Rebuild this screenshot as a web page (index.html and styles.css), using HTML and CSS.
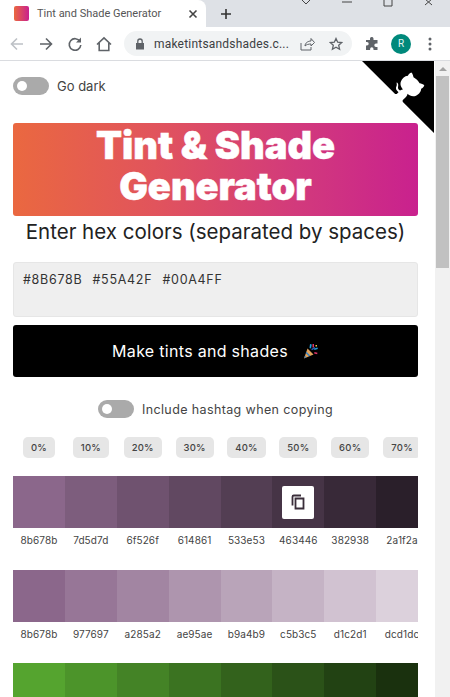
FILE: index.html
```html
<!DOCTYPE html>
<html lang="en">
<head>
<meta charset="utf-8">
<title>Tint and Shade Generator</title>
<link rel="stylesheet" href="styles.css">
</head>
<body>
<div class="browser">
  <header class="tabstrip">
    <div class="tab">
      <span class="favicon"></span>
      <span class="tab-title">Tint and Shade Generator</span>
      <svg class="tab-close" width="10" height="10" viewBox="0 0 10 10"><path d="M1.500 1.500l7 7M8.500 1.500l-7 7"/></svg>
    </div>
    <svg class="new-tab" width="12" height="12" viewBox="0 0 12 12"><path d="M6 1v10M1 6h10"/></svg>
    <div class="win-controls">
      <svg width="14" height="8" viewBox="0 0 14 8"><path d="M3 0l4 4 4-4"/></svg>
      <svg width="14" height="8" viewBox="0 0 14 8"><path d="M2 2h10"/></svg>
      <svg width="14" height="8" viewBox="0 0 14 8"><path d="M3 -4h8v10h-8z"/></svg>
      <svg width="14" height="8" viewBox="0 0 14 8"><path d="M3 -1l7 6M10 -1l-7 6"/></svg>
    </div>
  </header>
  <nav class="toolbar">
    <svg class="tool tool-off" width="16" height="16" viewBox="0 0 16 16"><path d="M14 8H2.500M8 2.500L2.500 8 8 13.500"/></svg>
    <svg class="tool" width="16" height="16" viewBox="0 0 16 16"><path d="M2 8h11.500M8 2.500L13.500 8 8 13.500"/></svg>
    <svg class="tool" width="16" height="16" viewBox="0 0 16 16"><path d="M13 5.500A5.800 5.800 0 1 0 13.800 9"/><path class="solid" d="M14 1.500v5h-5z"/></svg>
    <svg class="tool" width="16" height="16" viewBox="0 0 16 16"><path d="M1 8.500L8 1.800 15 8.500M3.200 7v7.500h9.600V7"/></svg>
    <div class="omnibox">
      <svg class="lock" width="10" height="12" viewBox="0 0 10 12"><path d="M1 5h8v6.500H1z"/><path class="lock-loop" d="M2.800 5V3.200a2.200 2.200 0 0 1 4.400 0V5"/></svg>
      <span class="url">maketintsandshades.c...</span>
      <svg class="tool share" width="15" height="14" viewBox="0 0 15 14"><path d="M1 6v7h10v-3M5 9c0-3 3-5 6-5V1.500L14.500 5.500 11 9V7C8.500 7 6.500 7.500 5 9z"/></svg>
      <svg class="tool star" width="14" height="14" viewBox="0 0 14 14"><path d="M7 1.500l1.700 3.700 4 .4-3 2.700.9 4L7 10.300l-3.600 2 .9-4-3-2.700 4-.4z"/></svg>
    </div>
    <svg class="puzzle" width="15" height="15" viewBox="0 0 15 15"><path d="M5 2.500a1.800 1.800 0 0 1 3.500 0V4h4v3.500H11a1.700 1.700 0 0 0 0 3.400h1.500V14h-4v-1a1.700 1.700 0 0 0-3.400 0v1H1V9.500h1a1.700 1.700 0 0 0 0-3.400H1V4h4z"/></svg>
    <span class="avatar">R</span>
    <svg class="kebab" width="4" height="14" viewBox="0 0 4 14"><circle cx="2" cy="2" r="1.500"/><circle cx="2" cy="7" r="1.500"/><circle cx="2" cy="12" r="1.500"/></svg>
  </nav>
  <div class="viewport">
    <main class="page">
      <a class="corner" href="#" aria-label="View source on GitHub">
        <svg width="72" height="72" viewBox="0 0 250 250">
          <path d="M0,0 L115,115 L130,115 L142,142 L250,250 L250,0 Z"/>
          <path class="octo" d="M128.300,109.000 C113.800,99.700 119.000,89.600 119.000,89.600 C122.000,82.700 120.500,78.600 120.500,78.600 C119.200,72.000 123.400,76.300 123.400,76.300 C127.300,80.900 125.500,87.300 125.500,87.300 C122.900,97.600 130.600,101.900 134.400,103.200"/>
          <path class="octo" d="M115.000,115.000 C114.900,115.100 118.700,116.500 119.800,115.400 L133.700,101.600 C136.900,99.200 139.900,98.400 142.200,98.600 C133.800,88.000 127.500,74.400 143.800,58.000 C148.500,53.400 154.000,51.200 159.700,51.000 C160.300,49.400 163.200,43.600 171.400,40.100 C171.400,40.100 176.100,42.500 178.800,56.200 C183.100,58.600 187.200,61.800 190.900,65.400 C194.500,69.000 197.700,73.200 200.100,77.600 C213.800,80.200 216.300,84.900 216.300,84.900 C212.700,93.100 206.900,96.000 205.400,96.600 C205.100,102.400 203.000,107.800 198.300,112.500 C181.900,128.900 168.300,122.500 157.700,114.100 C157.900,116.900 156.700,120.900 152.700,124.900 L141.000,136.500 C139.800,137.700 141.600,141.900 141.800,141.800 Z"/>
        </svg>
      </a>
      <label class="switch-row dark-row">
        <span class="switch"><span class="knob"></span></span>
        <span>Go dark</span>
      </label>
      <h1 class="hero">Tint &amp; Shade Generator</h1>
      <h2 class="prompt">Enter hex colors (separated by spaces)</h2>
      <div class="hex-input">#8B678B #55A42F #00A4FF</div>
      <button class="make">Make tints and shades
        <svg class="popper" width="16" height="16" viewBox="0 0 16 16">
          <path fill="#e0a15a" d="M1 15.500l3.500-10 6 6z"/>
          <path fill="#2f7fc4" d="M3.400 8.700l4 4-1.400.6-3.300-3.300zM1.900 12.800l1.500 1.500-1.400.6-.6-.6z"/>
          <path fill="#1d9bd8" d="M7 1l1.800.5-.8 4-1.500-.5zM11 5.500l3.500-1 .4 1.500-3.500 1z"/>
          <path fill="#e0356b" d="M9.500 1h1.500v3.500H9.500zM11.500 9l3 .8-.4 1.400-3-.8z"/>
          <path fill="#f4c542" d="M12.500 2h1.500v1.500h-1.500z"/>
          <path fill="#2a5fb8" d="M8.200 6l3.500-2 .7 1.200-3.500 2z"/>
        </svg>
      </button>
      <label class="switch-row hash-row">
        <span class="switch"><span class="knob"></span></span>
        <span>Include hashtag when copying</span>
      </label>
      <div class="cols percents">
        <span class="chip">0%</span><span class="chip">10%</span><span class="chip">20%</span><span class="chip">30%</span><span class="chip">40%</span><span class="chip">50%</span><span class="chip">60%</span><span class="chip">70%</span>
      </div>
      <section class="palette">
        <div class="cols swatches">
          <span class="swatch" style="background:#8b678b"></span><span class="swatch" style="background:#7d5d7d"></span><span class="swatch" style="background:#6f526f"></span><span class="swatch" style="background:#614861"></span><span class="swatch" style="background:#533e53"></span><span class="swatch" style="background:#463446"><span class="copy"><svg width="14" height="16" viewBox="0 0 14 16"><path d="M4.500 4.500h8v10h-8z"/><path d="M1.500 11.500V2.800q0-1.300 1.300-1.300H10"/></svg></span></span><span class="swatch" style="background:#382938"></span><span class="swatch" style="background:#2a1f2a"></span>
        </div>
        <div class="cols labels">
          <span>8b678b</span><span>7d5d7d</span><span>6f526f</span><span>614861</span><span>533e53</span><span>463446</span><span>382938</span><span>2a1f2a</span>
        </div>
      </section>
      <section class="palette">
        <div class="cols swatches">
          <span class="swatch" style="background:#8b678b"></span><span class="swatch" style="background:#977697"></span><span class="swatch" style="background:#a285a2"></span><span class="swatch" style="background:#ae95ae"></span><span class="swatch" style="background:#b9a4b9"></span><span class="swatch" style="background:#c5b3c5"></span><span class="swatch" style="background:#d1c2d1"></span><span class="swatch" style="background:#dcd1dc"></span>
        </div>
        <div class="cols labels">
          <span>8b678b</span><span>977697</span><span>a285a2</span><span>ae95ae</span><span>b9a4b9</span><span>c5b3c5</span><span>d1c2d1</span><span>dcd1dc</span>
        </div>
      </section>
      <section class="palette">
        <div class="cols swatches">
          <span class="swatch" style="background:#55a42f"></span><span class="swatch" style="background:#4c942a"></span><span class="swatch" style="background:#448326"></span><span class="swatch" style="background:#3b7321"></span><span class="swatch" style="background:#33621c"></span><span class="swatch" style="background:#2b5218"></span><span class="swatch" style="background:#224213"></span><span class="swatch" style="background:#1a310e"></span>
        </div>
      </section>
    </main>
    <aside class="scrollbar">
      <span class="scroll-up"></span>
      <span class="thumb"></span>
    </aside>
  </div>
</div>
</body>
</html>
```

FILE: styles.css
```css
* { box-sizing: border-box; }
html, body { margin: 0; height: 100%; overflow: hidden; }
body { font-family: "Inter", "Liberation Sans", sans-serif; color: #333; background: #fff; }
.browser { width: 450px; height: 697px; display: flex; flex-direction: column; overflow: hidden; }

.tabstrip { height: 27px; flex: none; background: #dee1e6; display: flex; align-items: center; position: relative; }
.tab { width: 206px; height: 27px; background: #fff; border-radius: 0 8px 0 0; display: flex; align-items: center; padding: 0 8px 0 14px; }
.favicon { width: 15px; height: 15px; border-radius: 2px; background: linear-gradient(90deg, #ea6840, #c9218e); flex: none; }
.tab-title { font: 11px "Roboto", "Liberation Sans", sans-serif; color: #555; margin-left: 8px; white-space: nowrap; flex: 1; }
.tab-close { stroke: #444; stroke-width: 1.600; fill: none; flex: none; }
.new-tab { margin-left: 14px; stroke: #333; stroke-width: 1.600; fill: none; }
.win-controls { margin-left: auto; display: flex; align-self: flex-start; gap: 27px; padding-right: 14px; }
.win-controls svg { stroke: #444; stroke-width: 1; fill: none; display: block; overflow: hidden; }

.toolbar { height: 34px; flex: none; background: #fff; border-bottom: 1px solid #dadce0; display: flex; align-items: center; padding: 0 0 0 9px; }
.tool { stroke: #5f6368; stroke-width: 1.600; fill: none; flex: none; margin-right: 13px; }
.tool-off { stroke: #bdc1c6; }
.tool .solid { fill: #5f6368; stroke: none; }
.omnibox { width: 228px; height: 25px; margin-left: -1px; background: #f1f3f4; border-radius: 13px; display: flex; align-items: center; padding-left: 11px; flex: none; }
.lock { flex: none; }
.lock path { fill: #5f6368; }
.lock .lock-loop { fill: none; stroke: #5f6368; stroke-width: 1.300; }
.url { font: 12px "Roboto", "Liberation Sans", sans-serif; color: #3c4043; margin-left: 9px; white-space: nowrap; flex: 1; letter-spacing: .2px; }
.share { stroke-width: 1; margin-right: 14px; }
.star { stroke-width: 1.300; margin-right: 9px; }
.puzzle { fill: #5f6368; margin-left: 13px; flex: none; }
.avatar { width: 20px; height: 20px; border-radius: 50%; background: #00897b; color: #e8f5f3; font: 10px/20px "Roboto", sans-serif; text-align: center; margin-left: 11px; flex: none; }
.kebab { fill: #5f6368; margin-left: 17px; flex: none; }

.viewport { flex: 1; min-height: 0; display: flex; }
.page { width: 435px; flex: none; padding: 0 17px 0 13px; position: relative; overflow: hidden; }
.corner { position: absolute; top: 0; right: 1px; line-height: 0; }
.corner svg { fill: #000; }
.corner .octo { fill: #fff; }

.switch-row { display: flex; align-items: center; gap: 8px; font-size: 13px; color: #444; }
.dark-row { margin-top: 16px; height: 18px; }
.hash-row { justify-content: center; margin-top: 23px; height: 18px; font-size: 12.500px; letter-spacing: .38px; }
.switch { width: 36px; height: 18px; background: #aaa; border-radius: 9px; display: flex; align-items: center; padding-left: 4px; flex: none; }
.knob { width: 10px; height: 10px; border-radius: 50%; background: #fff; }

.hero { margin: 28px 0 0; height: 93px; border-radius: 3px; background: linear-gradient(90deg, #ea6840, #e1545c 35%, #d23a7c 70%, #c9218e); color: #fff; font-size: 38px; font-weight: 900; line-height: 41px; -webkit-text-stroke: .5px #fff; text-align: center; padding: 0 50px 7px; display: flex; align-items: center; justify-content: center; }
.prompt { margin: 5px 0 0; height: 22px; font-size: 20.500px; font-weight: 400; line-height: 22px; text-align: center; color: #222; white-space: nowrap; }

.hex-input { margin-top: 19px; height: 55px; background: #efefef; border: 1px solid #e6e6e6; border-radius: 3px; padding: 7px 9px; font-size: 12.500px; line-height: 20px; color: #333; letter-spacing: .7px; word-spacing: 6px; }
.make { display: flex; align-items: center; justify-content: center; gap: 15px; width: 100%; height: 52px; margin-top: 8px; background: #000; color: #fff; border: 0; border-radius: 3px; font-family: inherit; font-size: 16px; letter-spacing: .3px; padding: 0; }

.cols { display: grid; grid-template-columns: repeat(8, 51.875px); width: 405px; overflow: hidden; }
.percents { margin-top: 19px; justify-items: center; height: 21px; }
.chip { background: #e6e6e6; border-radius: 5px; font-size: 9.500px; font-weight: 500; line-height: 21px; padding: 0 8px; color: #444; letter-spacing: .2px; }
.palette { margin-top: 18px; }
.palette + .palette { margin-top: 22.500px; }
.swatches { height: 52px; }
.swatch { display: flex; align-items: center; justify-content: center; }
.copy { width: 32px; height: 33px; background: #fff; border-radius: 2px; display: flex; align-items: center; justify-content: center; }
.copy svg { stroke: #3a2e3a; stroke-width: 1.800; fill: none; }
.labels { margin-top: 6px; height: 13px; justify-items: center; font-size: 10px; line-height: 13px; color: #444; letter-spacing: .1px; }

.scrollbar { flex: 1; background: #f1f1f1; display: flex; flex-direction: column; align-items: center; }
.scroll-up { margin-top: 6px; width: 0; height: 0; border: 4px solid transparent; border-top: 0; border-bottom: 4px solid #a3a3a3; }
.thumb { margin-top: 5px; width: 13px; height: 192px; background: #c1c1c1; }
```
